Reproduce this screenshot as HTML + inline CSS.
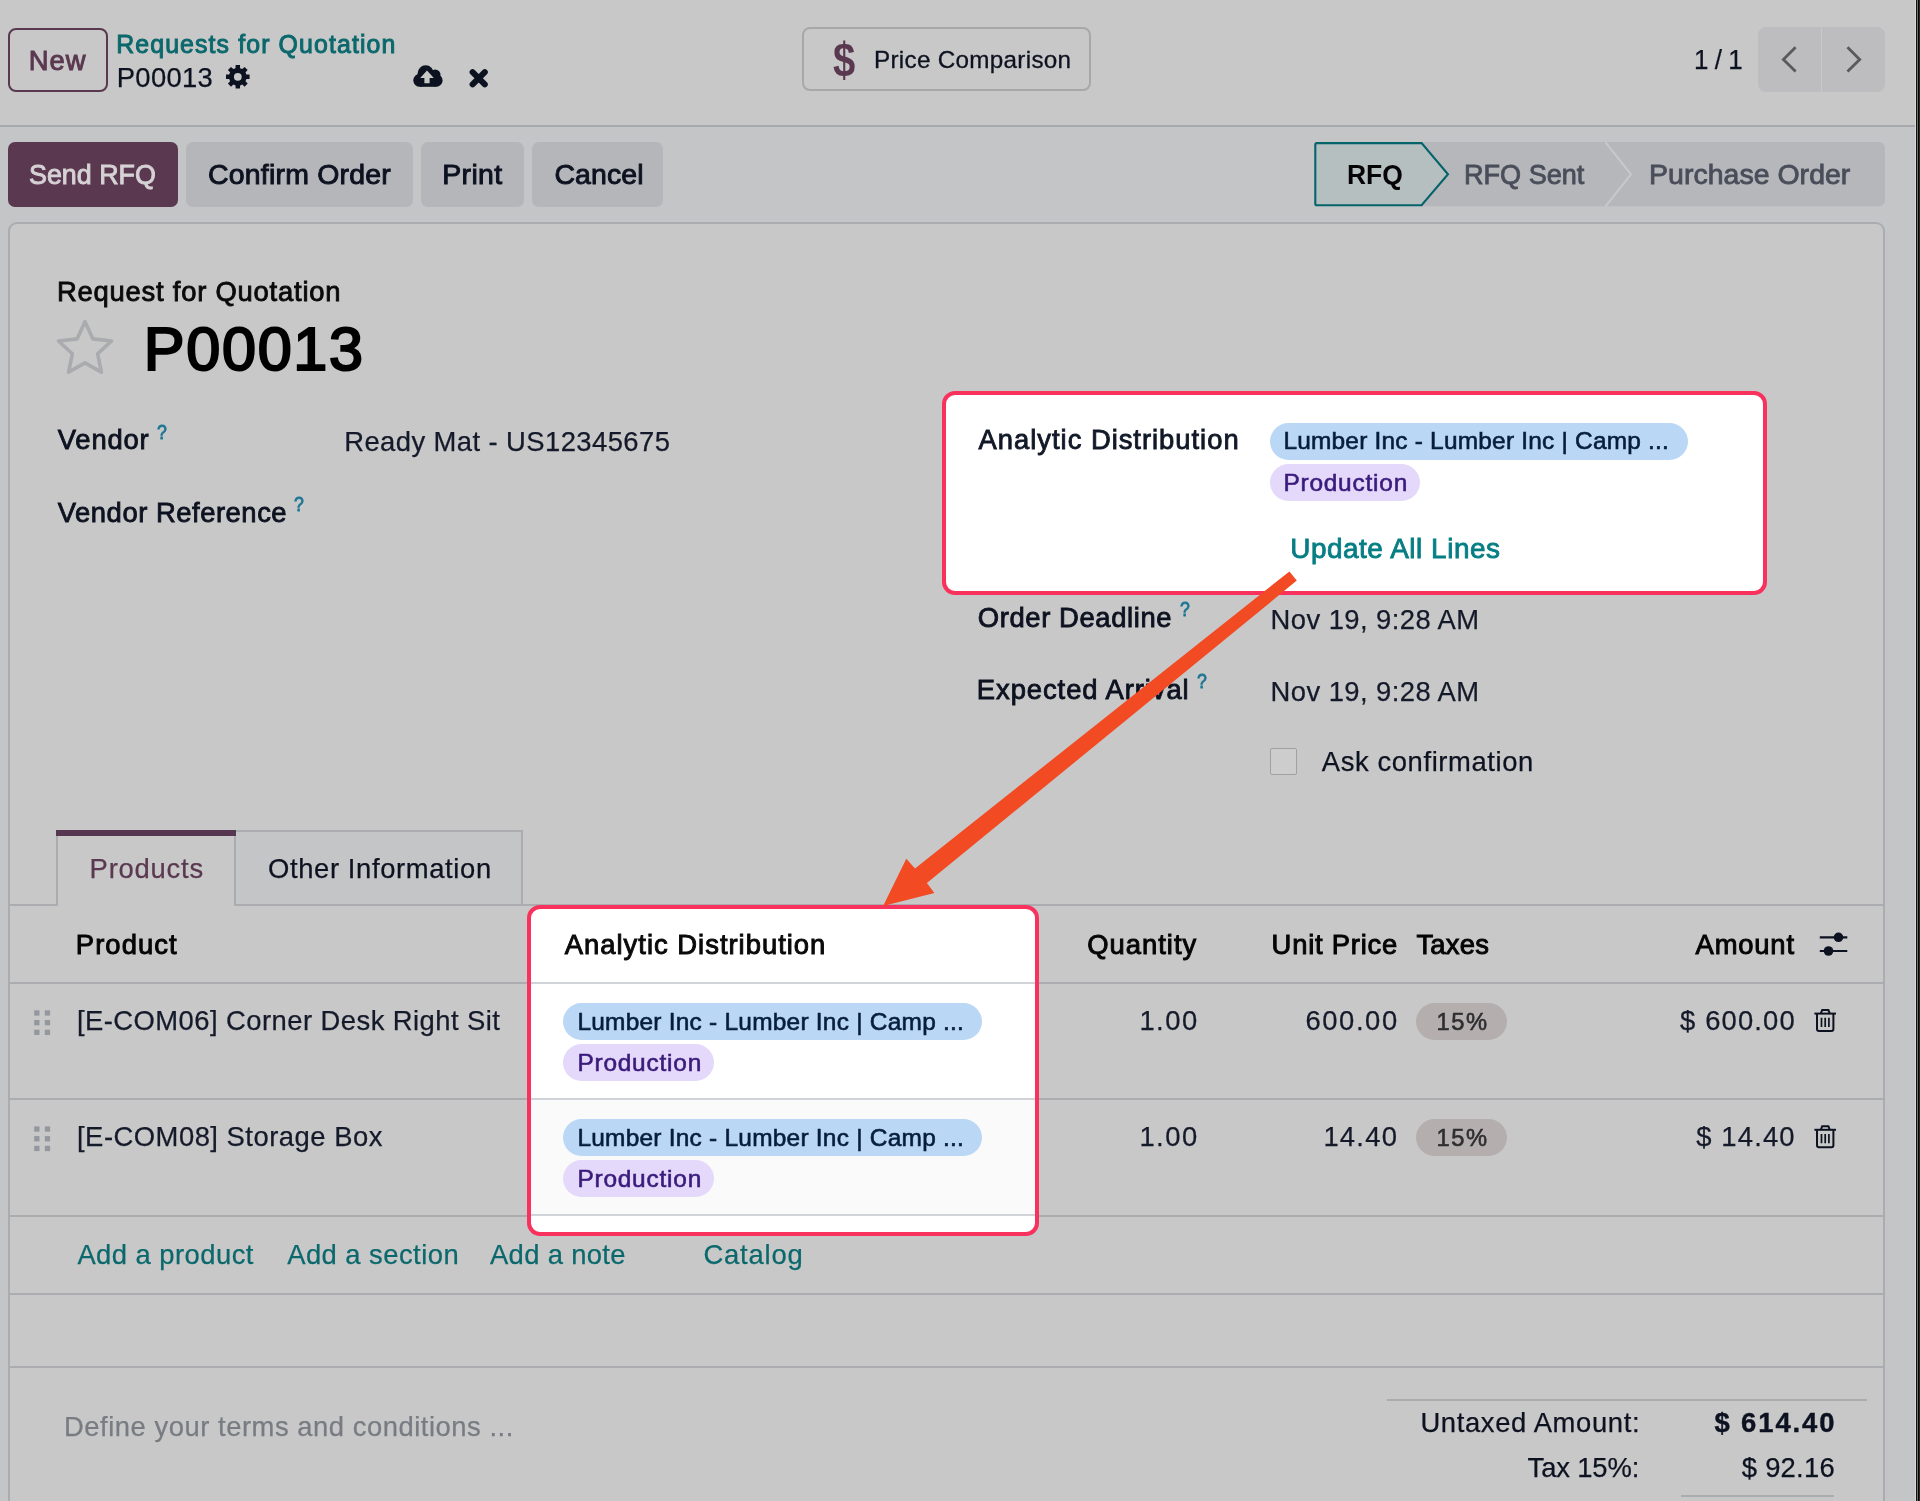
<!DOCTYPE html>
<html lang="en"><head><meta charset="utf-8"><title>Requests for Quotation - P00013</title>
<style>
html,body{margin:0;padding:0;}
body{width:1920px;height:1501px;overflow:hidden;background:#c4c5c7;font-family:"Liberation Sans", sans-serif;}
#pg{position:relative;width:1920px;height:1501px;overflow:hidden;}
#txt{position:absolute;left:0;top:0;width:1920px;height:1501px;will-change:transform;}
.r{position:absolute;}
.t{position:absolute;white-space:nowrap;line-height:1;font-family:"Liberation Sans", sans-serif;}
svg{position:absolute;left:0;top:0;}
</style></head><body><div id="pg">
<div class="r " style="left:0.0px;top:0.0px;width:1920.0px;height:1501.0px;background:#c4c5c7;"></div>
<div class="r " style="left:0.0px;top:0.0px;width:1920.0px;height:125.6px;background:#c8c8c8;"></div>
<div class="r " style="left:0.0px;top:124.6px;width:1916.0px;height:2.0px;background:#a8a9ac;"></div>
<div class="r" style="left:8.4px;top:221.6px;width:1876.4px;height:1320px;background:#c8c8c8;border:2px solid #aaacb0;border-radius:9px;box-sizing:border-box"></div>
<div class="r" style="left:8px;top:28.1px;width:99.9px;height:64px;border:2px solid #5a3950;border-radius:8px;box-sizing:border-box"></div>
<div class="r" style="left:801.5px;top:27.2px;width:289.6px;height:63.7px;border:2px solid #a8a8aa;border-radius:8px;box-sizing:border-box"></div>
<div class="r " style="left:1758.3px;top:26.8px;width:126.7px;height:64.8px;background:#bdbdc0;border-radius:8px"></div>
<div class="r " style="left:1820.7px;top:26.8px;width:1.6px;height:64.8px;background:#c8c8ca;"></div>
<div class="r " style="left:8.0px;top:142.2px;width:170.1px;height:64.5px;background:#5a3850;border-radius:7px"></div>
<div class="r " style="left:186.0px;top:142.2px;width:227.0px;height:64.5px;background:#b5b6ba;border-radius:7px"></div>
<div class="r " style="left:421.0px;top:142.2px;width:102.9px;height:64.5px;background:#b5b6ba;border-radius:7px"></div>
<div class="r " style="left:532.3px;top:142.2px;width:131.2px;height:64.5px;background:#b5b6ba;border-radius:7px"></div>
<div class="r " style="left:10.0px;top:904.0px;width:1874.0px;height:2.0px;background:#aaacb0;"></div>
<div class="r" style="left:234.1px;top:830px;width:289px;height:76px;background:#c4c5c7;border:2px solid #aaacb0;box-sizing:border-box"></div>
<div class="r" style="left:56.2px;top:830px;width:177.9px;height:76.2px;background:#c8c8c8;border-left:2px solid #aaacb0;box-sizing:border-box"></div>
<div class="r " style="left:56.2px;top:829.8px;width:179.9px;height:6.2px;background:#563650;"></div>
<div class="r " style="left:10.0px;top:982.4px;width:1874.0px;height:2.0px;background:#aaacb0;"></div>
<div class="r " style="left:10.0px;top:1098.4px;width:1874.0px;height:2.0px;background:#aaacb0;"></div>
<div class="r " style="left:10.0px;top:1214.5px;width:1874.0px;height:2.0px;background:#aaacb0;"></div>
<div class="r " style="left:10.0px;top:1292.7px;width:1874.0px;height:2.0px;background:#aaacb0;"></div>
<div class="r " style="left:10.0px;top:1366.4px;width:1874.0px;height:2.0px;background:#aaacb0;"></div>
<div class="r " style="left:1387.0px;top:1398.8px;width:480.3px;height:2.0px;background:#aaacb0;"></div>
<div class="r " style="left:1681.2px;top:1495.0px;width:152.8px;height:2.0px;background:#aaacb0;"></div>
<div class="r " style="left:1416.2px;top:1002.9px;width:90.7px;height:36.9px;background:#b4aeae;border-radius:19px"></div>
<div class="r " style="left:1416.2px;top:1119.1px;width:90.7px;height:36.8px;background:#b4aeae;border-radius:19px"></div>
<div class="r" style="left:1270.1px;top:747.7px;width:26.9px;height:26.9px;background:#cdcdcd;border:1.6px solid #9fa1a5;border-radius:2px;box-sizing:border-box"></div>
<div class="r" style="left:942.1px;top:390.8px;width:825px;height:204px;background:#fff;border:4px solid #f8325d;border-radius:13px;box-sizing:border-box"></div>
<div class="r " style="left:1269.9px;top:422.9px;width:417.8px;height:36.9px;background:#bad7f6;border-radius:19px"></div>
<div class="r " style="left:1269.9px;top:464.1px;width:149.7px;height:36.8px;background:#e4d9fa;border-radius:19px"></div>
<div class="r" style="left:527.2px;top:905.3px;width:511.8px;height:330.7px;background:#fff;border:4px solid #f8325d;border-radius:13px;box-sizing:border-box;overflow:hidden"><div class="r" style="left:0;top:190.1px;width:510px;height:116.1px;background:#fafafa"></div><div class="r" style="left:0;top:73.1px;width:510px;height:2px;background:#d0d3d7"></div><div class="r" style="left:0;top:189.1px;width:510px;height:2px;background:#d0d3d7"></div><div class="r" style="left:0;top:305.2px;width:510px;height:2px;background:#d0d3d7"></div></div>
<div class="r " style="left:563.3px;top:1003.1px;width:418.4px;height:36.9px;background:#bad7f6;border-radius:19px"></div>
<div class="r " style="left:563.3px;top:1044.2px;width:150.7px;height:36.7px;background:#e4d9fa;border-radius:19px"></div>
<div class="r " style="left:563.3px;top:1119.3px;width:418.4px;height:36.9px;background:#bad7f6;border-radius:19px"></div>
<div class="r " style="left:563.3px;top:1160.4px;width:150.7px;height:36.7px;background:#e4d9fa;border-radius:19px"></div>
<div class="r " style="left:1915.0px;top:0.0px;width:1.0px;height:1501.0px;background:#d9d9d9;"></div>
<div class="r " style="left:1916.0px;top:0.0px;width:1.0px;height:1501.0px;background:#101010;"></div>
<div class="r " style="left:1917.0px;top:0.0px;width:1.0px;height:1501.0px;background:#727272;"></div>
<div class="r " style="left:1918.0px;top:0.0px;width:1.0px;height:1501.0px;background:#050505;"></div>
<div class="r " style="left:1919.0px;top:0.0px;width:1.0px;height:1501.0px;background:#2b2b1e;"></div>
<svg width="1920" height="1501" viewBox="0 0 1920 1501">
<path d="M1421,142.1 H1879 a6,6 0 0 1 6,6 V200.3 a6,6 0 0 1 -6,6 H1421 Z" fill="#b6b7bb"/>
<path d="M1316.8,143.1 H1421.6 L1448,174.2 L1421.6,205.3 H1316.8 a1.5,1.5 0 0 1 -1.5,-1.5 V144.6 a1.5,1.5 0 0 1 1.5,-1.5 Z" fill="#b6bfc0" stroke="#05636a" stroke-width="2.1" stroke-linejoin="miter"/>
<path d="M1605.5,142.3 L1631,174.3 L1605.5,206.3" fill="none" stroke="#c9c9cb" stroke-width="2"/>
</svg>
<div id="txt">
<span class="t" id="new" style="left:28.80px;top:46.80px;font-size:27.4px;color:#5a3950;-webkit-text-stroke:0.95px currentColor;letter-spacing:1.000px;">New</span>
<span class="t" id="bc1" style="left:116.20px;top:31.56px;font-size:24.87px;color:#0b686c;-webkit-text-stroke:0.95px currentColor;letter-spacing:1.119px;">Requests for Quotation</span>
<span class="t" id="bc2" style="left:116.80px;top:63.80px;font-size:27.4px;color:#0d1220;-webkit-text-stroke:0.25px currentColor;letter-spacing:0.300px;">P00013</span>
<span class="t" id="pc" style="left:874.00px;top:48.38px;font-size:24.24px;color:#0d1220;-webkit-text-stroke:0.3px currentColor;letter-spacing:0.300px;">Price Comparison</span>
<span class="t" id="dollar" style="left:833.20px;top:34.60px;font-size:48.8px;color:#5a3950;font-weight:700;transform:scaleX(0.82);transform-origin:0 0;">$</span>
<span class="t" id="pager" style="left:1694.00px;top:45.80px;font-size:27.4px;color:#0d1220;-webkit-text-stroke:0.25px currentColor;transform:scaleX(0.9481);transform-origin:0 0;word-spacing:-1px;">1 / 1</span>
<span class="t" id="b1" style="left:28.80px;top:159.77px;font-size:28.46px;color:#d6d2d5;-webkit-text-stroke:0.95px currentColor;transform:scaleX(0.9436);transform-origin:0 0;">Send RFQ</span>
<span class="t" id="b2" style="left:208.00px;top:159.77px;font-size:28.46px;color:#0d1220;-webkit-text-stroke:0.95px currentColor;letter-spacing:0.208px;">Confirm Order</span>
<span class="t" id="b3" style="left:442.20px;top:159.77px;font-size:28.46px;color:#0d1220;-webkit-text-stroke:0.95px currentColor;letter-spacing:0.375px;">Print</span>
<span class="t" id="b4" style="left:554.40px;top:159.77px;font-size:28.46px;color:#0d1220;-webkit-text-stroke:0.95px currentColor;letter-spacing:0.100px;">Cancel</span>
<span class="t" id="s1" style="left:1346.80px;top:159.77px;font-size:28.46px;color:#050505;font-weight:700;transform:scaleX(0.9300);transform-origin:0 0;">RFQ</span>
<span class="t" id="s2" style="left:1464.20px;top:159.77px;font-size:28.46px;color:#494e5a;-webkit-text-stroke:0.85px currentColor;transform:scaleX(0.9517);transform-origin:0 0;">RFQ Sent</span>
<span class="t" id="s3" style="left:1649.00px;top:159.77px;font-size:28.46px;color:#494e5a;-webkit-text-stroke:0.85px currentColor;letter-spacing:0.038px;">Purchase Order</span>
<span class="t" id="rfq" style="left:57.00px;top:277.80px;font-size:27.4px;color:#0a0a0a;-webkit-text-stroke:0.85px currentColor;letter-spacing:0.775px;">Request for Quotation</span>
<span class="t" id="h1" style="left:143.80px;top:319.44px;font-size:61.13px;color:#000;-webkit-text-stroke:2.2px currentColor;letter-spacing:1.700px;">P00013</span>
<span class="t" id="l_vendor" style="left:57.80px;top:425.80px;font-size:27.4px;color:#0d1220;-webkit-text-stroke:0.85px currentColor;letter-spacing:0.800px;">Vendor</span>
<span class="t" id="q1" style="left:157.20px;top:420.96px;font-size:21.08px;color:#1b7593;-webkit-text-stroke:0.85px currentColor;transform:scaleX(0.84);transform-origin:0 0;">?</span>
<span class="t" id="v_vendor" style="left:344.20px;top:427.80px;font-size:27.4px;color:#141a2a;-webkit-text-stroke:0.25px currentColor;letter-spacing:0.429px;">Ready Mat - US12345675</span>
<span class="t" id="l_vref" style="left:57.80px;top:498.80px;font-size:27.4px;color:#0d1220;-webkit-text-stroke:0.85px currentColor;letter-spacing:0.533px;">Vendor Reference</span>
<span class="t" id="q2" style="left:294.40px;top:492.96px;font-size:21.08px;color:#1b7593;-webkit-text-stroke:0.85px currentColor;transform:scaleX(0.84);transform-origin:0 0;">?</span>
<span class="t" id="l_ad" style="left:978.60px;top:425.80px;font-size:27.4px;color:#111827;-webkit-text-stroke:0.85px currentColor;letter-spacing:0.975px;">Analytic Distribution</span>
<span class="t" id="tag1a" style="left:1283.40px;top:429.27px;font-size:24.45px;color:#071d3e;-webkit-text-stroke:0.6px currentColor;letter-spacing:0.212px;">Lumber Inc - Lumber Inc | Camp ...</span>
<span class="t" id="tag1b" style="left:1283.40px;top:471.27px;font-size:24.45px;color:#3a1b7c;-webkit-text-stroke:0.6px currentColor;letter-spacing:0.778px;">Production</span>
<span class="t" id="upd" style="left:1290.20px;top:534.53px;font-size:27.93px;color:#067e84;-webkit-text-stroke:0.85px currentColor;letter-spacing:0.533px;">Update All Lines</span>
<span class="t" id="l_od" style="left:977.80px;top:603.80px;font-size:27.4px;color:#0d1220;-webkit-text-stroke:0.85px currentColor;letter-spacing:0.615px;">Order Deadline</span>
<span class="t" id="q3" style="left:1180.00px;top:597.96px;font-size:21.08px;color:#1b7593;-webkit-text-stroke:0.85px currentColor;transform:scaleX(0.84);transform-origin:0 0;">?</span>
<span class="t" id="v_od" style="left:1270.60px;top:605.80px;font-size:27.4px;color:#141a2a;-webkit-text-stroke:0.25px currentColor;letter-spacing:0.429px;">Nov 19, 9:28 AM</span>
<span class="t" id="l_ea" style="left:976.80px;top:675.80px;font-size:27.4px;color:#0d1220;-webkit-text-stroke:0.85px currentColor;letter-spacing:0.933px;">Expected Arrival</span>
<span class="t" id="q4" style="left:1197.00px;top:669.96px;font-size:21.08px;color:#1b7593;-webkit-text-stroke:0.85px currentColor;transform:scaleX(0.84);transform-origin:0 0;">?</span>
<span class="t" id="v_ea" style="left:1270.60px;top:677.80px;font-size:27.4px;color:#141a2a;-webkit-text-stroke:0.25px currentColor;letter-spacing:0.429px;">Nov 19, 9:28 AM</span>
<span class="t" id="ask" style="left:1321.80px;top:747.80px;font-size:27.4px;color:#0d1220;-webkit-text-stroke:0.25px currentColor;letter-spacing:0.600px;">Ask confirmation</span>
<span class="t" id="tab1" style="left:89.60px;top:854.80px;font-size:27.4px;color:#5a3950;-webkit-text-stroke:0.25px currentColor;letter-spacing:0.786px;">Products</span>
<span class="t" id="tab2" style="left:268.00px;top:854.80px;font-size:27.4px;color:#0d1220;-webkit-text-stroke:0.25px currentColor;letter-spacing:0.625px;">Other Information</span>
<span class="t" id="th1" style="left:75.80px;top:930.80px;font-size:27.4px;color:#050505;-webkit-text-stroke:0.95px currentColor;letter-spacing:1.083px;">Product</span>
<span class="t" id="th2" style="left:564.80px;top:930.80px;font-size:27.4px;color:#0a0a0a;-webkit-text-stroke:0.95px currentColor;letter-spacing:1.000px;">Analytic Distribution</span>
<span class="t" id="th3" style="left:1087.20px;top:930.80px;font-size:27.4px;color:#050505;-webkit-text-stroke:0.95px currentColor;letter-spacing:1.000px;">Quantity</span>
<span class="t" id="th4" style="left:1271.60px;top:930.80px;font-size:27.4px;color:#050505;-webkit-text-stroke:0.95px currentColor;letter-spacing:0.778px;">Unit Price</span>
<span class="t" id="th5" style="left:1416.40px;top:930.80px;font-size:27.4px;color:#050505;-webkit-text-stroke:0.95px currentColor;letter-spacing:0.250px;">Taxes</span>
<span class="t" id="th6" style="left:1695.60px;top:930.80px;font-size:27.4px;color:#050505;-webkit-text-stroke:0.95px currentColor;letter-spacing:0.800px;">Amount</span>
<span class="t" id="r1p" style="left:77.00px;top:1006.80px;font-size:27.4px;color:#141a2a;-webkit-text-stroke:0.25px currentColor;letter-spacing:0.450px;">[E-COM06] Corner Desk Right Sit</span>
<span class="t" id="r1ta" style="left:577.40px;top:1010.27px;font-size:24.45px;color:#071d3e;-webkit-text-stroke:0.6px currentColor;letter-spacing:0.242px;">Lumber Inc - Lumber Inc | Camp ...</span>
<span class="t" id="r1tb" style="left:577.40px;top:1051.28px;font-size:24.45px;color:#3a1b7c;-webkit-text-stroke:0.6px currentColor;letter-spacing:0.778px;">Production</span>
<span class="t" id="r1q" style="left:1139.40px;top:1006.80px;font-size:27.4px;color:#141a2a;-webkit-text-stroke:0.25px currentColor;letter-spacing:1.500px;">1.00</span>
<span class="t" id="r1u" style="left:1305.40px;top:1006.80px;font-size:27.4px;color:#141a2a;-webkit-text-stroke:0.25px currentColor;letter-spacing:1.600px;">600.00</span>
<span class="t" id="r1x" style="left:1436.60px;top:1011.14px;font-size:23.71px;color:#2e2e31;-webkit-text-stroke:0.6px currentColor;letter-spacing:1.500px;">15%</span>
<span class="t" id="r1a" style="left:1680.00px;top:1006.80px;font-size:27.4px;color:#141a2a;-webkit-text-stroke:0.25px currentColor;letter-spacing:1.143px;">$ 600.00</span>
<span class="t" id="r2p" style="left:77.00px;top:1122.80px;font-size:27.4px;color:#141a2a;-webkit-text-stroke:0.25px currentColor;letter-spacing:0.500px;">[E-COM08] Storage Box</span>
<span class="t" id="r2ta" style="left:577.40px;top:1126.28px;font-size:24.45px;color:#071d3e;-webkit-text-stroke:0.6px currentColor;letter-spacing:0.242px;">Lumber Inc - Lumber Inc | Camp ...</span>
<span class="t" id="r2tb" style="left:577.40px;top:1167.28px;font-size:24.45px;color:#3a1b7c;-webkit-text-stroke:0.6px currentColor;letter-spacing:0.778px;">Production</span>
<span class="t" id="r2q" style="left:1139.40px;top:1122.80px;font-size:27.4px;color:#141a2a;-webkit-text-stroke:0.25px currentColor;letter-spacing:1.500px;">1.00</span>
<span class="t" id="r2u" style="left:1323.40px;top:1122.80px;font-size:27.4px;color:#141a2a;-webkit-text-stroke:0.25px currentColor;letter-spacing:1.250px;">14.40</span>
<span class="t" id="r2x" style="left:1436.60px;top:1127.14px;font-size:23.71px;color:#2e2e31;-webkit-text-stroke:0.6px currentColor;letter-spacing:1.500px;">15%</span>
<span class="t" id="r2a" style="left:1696.20px;top:1122.80px;font-size:27.4px;color:#141a2a;-webkit-text-stroke:0.25px currentColor;letter-spacing:1.167px;">$ 14.40</span>
<span class="t" id="a1" style="left:77.40px;top:1240.80px;font-size:27.4px;color:#0b686c;-webkit-text-stroke:0.25px currentColor;letter-spacing:0.458px;">Add a product</span>
<span class="t" id="a2" style="left:287.20px;top:1240.80px;font-size:27.4px;color:#0b686c;-webkit-text-stroke:0.25px currentColor;letter-spacing:0.458px;">Add a section</span>
<span class="t" id="a3" style="left:490.00px;top:1240.80px;font-size:27.4px;color:#0b686c;-webkit-text-stroke:0.25px currentColor;letter-spacing:0.333px;">Add a note</span>
<span class="t" id="a4" style="left:703.40px;top:1240.80px;font-size:27.4px;color:#0b686c;-webkit-text-stroke:0.25px currentColor;letter-spacing:0.833px;">Catalog</span>
<span class="t" id="terms" style="left:64.00px;top:1412.80px;font-size:27.4px;color:#787c82;-webkit-text-stroke:0.25px currentColor;letter-spacing:0.529px;">Define your terms and conditions ...</span>
<span class="t" id="ua" style="left:1420.40px;top:1408.80px;font-size:27.4px;color:#0d1220;-webkit-text-stroke:0.25px currentColor;letter-spacing:0.643px;">Untaxed Amount:</span>
<span class="t" id="uav" style="left:1714.40px;top:1408.80px;font-size:27.4px;color:#0d1220;font-weight:700;-webkit-text-stroke:0.4px currentColor;letter-spacing:1.929px;">$ 614.40</span>
<span class="t" id="tx" style="left:1527.60px;top:1453.80px;font-size:27.4px;color:#0d1220;-webkit-text-stroke:0.25px currentColor;letter-spacing:-0.143px;">Tax 15%:</span>
<span class="t" id="txv" style="left:1741.80px;top:1453.80px;font-size:27.4px;color:#0d1220;-webkit-text-stroke:0.25px currentColor;letter-spacing:0.250px;">$ 92.16</span>
</div>
<svg width="1920" height="1501" viewBox="0 0 1920 1501">
<path d="M1795.6,47.2 L1783.4,59.4 L1795.6,71.6" fill="none" stroke="#5a5a5d" stroke-width="2.8"/>
<path d="M1847.5,47.2 L1859.7,59.4 L1847.5,71.6" fill="none" stroke="#5a5a5d" stroke-width="2.8"/>
<path d="M246.40,74.52 L249.60,74.60 L249.60,79.00 L246.40,79.08 L245.50,81.27 L247.70,83.58 L244.58,86.70 L242.27,84.50 L240.08,85.40 L240.00,88.60 L235.60,88.60 L235.52,85.40 L233.33,84.50 L231.02,86.70 L227.90,83.58 L230.10,81.27 L229.20,79.08 L226.00,79.00 L226.00,74.60 L229.20,74.52 L230.10,72.33 L227.90,70.02 L231.02,66.90 L233.33,69.10 L235.52,68.20 L235.60,65.00 L240.00,65.00 L240.08,68.20 L242.27,69.10 L244.58,66.90 L247.70,70.02 L245.50,72.33Z M241.70,76.80 A3.9,3.9 0 1,0 233.90,76.80 A3.9,3.9 0 1,0 241.70,76.80Z" fill="#0d1220" fill-rule="evenodd"/>
<g fill="#0d1220"><circle cx="419.8" cy="80.3" r="6.5"/><circle cx="425.7" cy="73.4" r="8.1"/><circle cx="435.2" cy="74.7" r="5.3"/><circle cx="436.3" cy="80.4" r="6.3"/><rect x="419.8" y="76" width="16.5" height="10.8"/></g>
<path d="M427,70.4 L433.8,77.9 H429.6 V83.2 H424.4 V77.9 H420.2 Z" fill="#c8c8c8"/>
<path d="M472.6,72.2 L484.8,84.4 M484.8,72.2 L472.6,84.4" stroke="#0d1220" stroke-width="6" stroke-linecap="round"/>
<polygon points="85.00,321.70 92.82,338.84 111.53,340.98 97.65,353.71 101.40,372.17 85.00,362.90 68.60,372.17 72.35,353.71 58.47,340.98 77.18,338.84" fill="none" stroke="#a9abae" stroke-width="3.6" stroke-linejoin="round"/>
<rect x="34.2" y="1010.3" width="5.3" height="5.3" fill="#93979e"/>
<rect x="34.2" y="1020.0" width="5.3" height="5.3" fill="#93979e"/>
<rect x="34.2" y="1029.7" width="5.3" height="5.3" fill="#93979e"/>
<rect x="44.8" y="1010.3" width="5.3" height="5.3" fill="#93979e"/>
<rect x="44.8" y="1020.0" width="5.3" height="5.3" fill="#93979e"/>
<rect x="44.8" y="1029.7" width="5.3" height="5.3" fill="#93979e"/>
<rect x="34.2" y="1126.4" width="5.3" height="5.3" fill="#93979e"/>
<rect x="34.2" y="1136.1" width="5.3" height="5.3" fill="#93979e"/>
<rect x="34.2" y="1145.8" width="5.3" height="5.3" fill="#93979e"/>
<rect x="44.8" y="1126.4" width="5.3" height="5.3" fill="#93979e"/>
<rect x="44.8" y="1136.1" width="5.3" height="5.3" fill="#93979e"/>
<rect x="44.8" y="1145.8" width="5.3" height="5.3" fill="#93979e"/>
<path d="M1819.8,937.3 H1847.3 M1819.8,951 H1847.3" stroke="#0d1220" stroke-width="2.2"/>
<circle cx="1838.5" cy="937.3" r="4.8" fill="#0d1220"/><circle cx="1828.5" cy="951" r="4.8" fill="#0d1220"/>
<g transform="translate(0,0)" fill="none" stroke="#0d1220" stroke-width="2"><path d="M1814.4,1013.6 H1836"/><path d="M1820.8,1013.6 L1822.2,1010 H1828.4 L1829.8,1013.6"/><path d="M1817,1014 V1029 a2,2 0 0 0 2,2 H1831.4 a2,2 0 0 0 2,-2 V1014"/><path d="M1821.5,1017.8 V1027 M1825.2,1017.8 V1027 M1828.9,1017.8 V1027" stroke-width="1.7"/></g>
<g transform="translate(0,116.2)" fill="none" stroke="#0d1220" stroke-width="2"><path d="M1814.4,1013.6 H1836"/><path d="M1820.8,1013.6 L1822.2,1010 H1828.4 L1829.8,1013.6"/><path d="M1817,1014 V1029 a2,2 0 0 0 2,2 H1831.4 a2,2 0 0 0 2,-2 V1014"/><path d="M1821.5,1017.8 V1027 M1825.2,1017.8 V1027 M1828.9,1017.8 V1027" stroke-width="1.7"/></g>
<polygon points="1289.4,571.4 1296.8,580.6 926.9,883.1 934.4,893.1 883.1,906 906.3,858.8 915,868.5" fill="#f24a22"/>
</svg>
</div></body></html>
